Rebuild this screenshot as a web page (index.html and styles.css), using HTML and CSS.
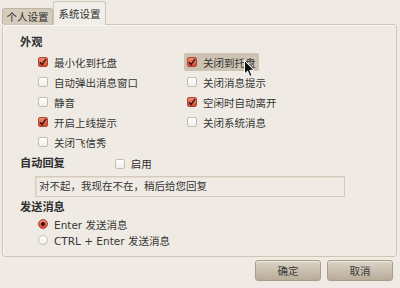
FILE: index.html
```html
<!DOCTYPE html>
<html lang="zh">
<head>
<meta charset="utf-8">
<link rel="stylesheet" href="styles.css">
</head>
<body>
<div class="tabs">
  <div class="tab">个人设置</div>
  <div class="tab active">系统设置</div>
</div>
<div class="panel">
  <div class="heading">外观</div>
  <div class="grid">
    <label class="opt"><span class="cb on"></span>最小化到托盘</label>
    <label class="opt hover"><span class="cb on"></span>关闭到托盘</label>
    <label class="opt"><span class="cb"></span>自动弹出消息窗口</label>
    <label class="opt"><span class="cb"></span>关闭消息提示</label>
    <label class="opt"><span class="cb"></span>静音</label>
    <label class="opt"><span class="cb on"></span>空闲时自动离开</label>
    <label class="opt"><span class="cb on"></span>开启上线提示</label>
    <label class="opt"><span class="cb"></span>关闭系统消息</label>
    <label class="opt"><span class="cb"></span>关闭飞信秀</label>
  </div>
  <div class="heading row-auto">自动回复<label class="opt enable"><span class="cb"></span>启用</label></div>
  <div class="entry">对不起，我现在不在，稍后给您回复</div>
  <div class="heading send">发送消息</div>
  <div class="radios">
    <label class="opt radio-row"><span class="rb on"></span>Enter 发送消息</label>
    <label class="opt radio-row"><span class="rb"></span>CTRL + Enter 发送消息</label>
  </div>
</div>
<div class="buttons">
  <div class="btn">确定</div>
  <div class="btn">取消</div>
</div>
<svg class="cursor" width="12" height="18" viewBox="0 0 12 18"><path d="M0.5 0.5 L0.5 14 L3.6 11 L5.8 16.5 L8 15.6 L5.8 10.3 L10 10.3 Z" fill="#111" stroke="#fff" stroke-width="1"/></svg>
</body>
</html>
```

FILE: styles.css
```css
html, body {
  margin: 0;
  padding: 0;
}
body {
  width: 400px;
  height: 288px;
  background: #efebe4;
  font-family: "DejaVu Sans", "Noto Sans CJK SC", sans-serif;
  font-size: 10.5px;
  color: #363636;
  position: relative;
  overflow: hidden;
}
.tabs {
  display: flex;
  align-items: flex-end;
  height: 24px;
  padding-left: 2px;
  position: relative;
  z-index: 2;
}
.tab {
  box-sizing: border-box;
  width: 51px;
  height: 16px;
  background: #d5ccbc;
  border: 1px solid #bfb4a1;
  border-bottom: none;
  border-radius: 3px 3px 0 0;
  display: flex;
  align-items: center;
  justify-content: center;
  color: #2e2e2e;
}
.tab.active {
  width: 53px;
  height: 24px;
  margin-bottom: -1px;
  background: #f1eee9;
  border-color: #cfc6b7;
  padding-bottom: 1px;
}
.panel {
  box-sizing: border-box;
  margin: 0 3px 0 2px;
  height: 233px;
  border: 1px solid #cfc6b6;
  border-radius: 3px;
  box-shadow: inset 1px 1px 0 #f8f6f2;
  padding: 9px 0 0 17px;
  background: #efebe4;
}
.heading {
  height: 18px;
  line-height: 18px;
  font-weight: bold;
  font-size: 11.2px;
  color: #2e2e2e;
}
.grid {
  display: grid;
  grid-template-columns: 149px 160px;
  grid-auto-rows: 20px;
  margin-left: 15px;
}
.opt {
  display: flex;
  align-items: center;
  gap: 6px;
  padding-left: 3px;
  white-space: nowrap;
  font-weight: normal;
  font-size: 10.5px;
}
.opt.hover {
  justify-self: start;
  align-self: center;
  height: 18px;
  padding-right: 3px;
  background: #cdc3b2;
  border-radius: 2px;
}
.cb {
  box-sizing: border-box;
  width: 10px;
  height: 10px;
  border: 1px solid #c4bcae;
  border-radius: 2px;
  background: linear-gradient(#ffffff, #f1efeb);
  flex: none;
}
.cb.on {
  border-color: #b4442f;
  background:
    url("data:image/svg+xml,%3Csvg xmlns='http://www.w3.org/2000/svg' width='8' height='8' viewBox='0 0 8 8'%3E%3Cpath d='M1 4.2 L3 6.6 L7 0.8' fill='none' stroke='%23381410' stroke-width='1.4'/%3E%3C/svg%3E") center/8px 8px no-repeat,
    linear-gradient(#f08a73, #cf4a32);
}
.row-auto {
  margin-top: 3px;
  display: flex;
}
.opt.enable {
  margin-left: 47px;
}
.entry {
  box-sizing: border-box;
  margin: 3px 0 0 15px;
  width: 310px;
  height: 21px;
  border: 1px solid #d4cab9;
  box-shadow: inset 1px 1px 0 #e4ddd1;
  background: #efebe4;
  padding-left: 3px;
  line-height: 19px;
  color: #333;
}
.heading.send {
  margin-top: 3px;
  height: 16px;
  line-height: 16px;
}
.radios {
  margin-left: 15px;
  display: flex;
  flex-direction: column;
}
.radio-row {
  height: 16px;
}
.rb {
  box-sizing: border-box;
  width: 10px;
  height: 10px;
  border-radius: 50%;
  border: 1px solid #c4bcae;
  background: linear-gradient(#ffffff, #f1efeb);
  flex: none;
}
.rb.on {
  border-color: #b4442f;
  background: radial-gradient(circle, #3a1410 0 1.6px, transparent 2.2px), linear-gradient(#f08a73, #cf4a32);
}
.buttons {
  display: flex;
  justify-content: flex-end;
  gap: 6px;
  padding-right: 7px;
  margin-top: 3px;
}
.btn {
  box-sizing: border-box;
  width: 66px;
  height: 21px;
  border: 1px solid #a89d8b;
  border-radius: 3px;
  background: linear-gradient(#ddd4c6, #b8ac99);
  box-shadow: inset 0 1px 0 #ece6dc;
  display: flex;
  align-items: center;
  justify-content: center;
  color: #3a3a3a;
}
.cursor {
  position: absolute;
  left: 244px;
  top: 60px;
  z-index: 5;
}
```
